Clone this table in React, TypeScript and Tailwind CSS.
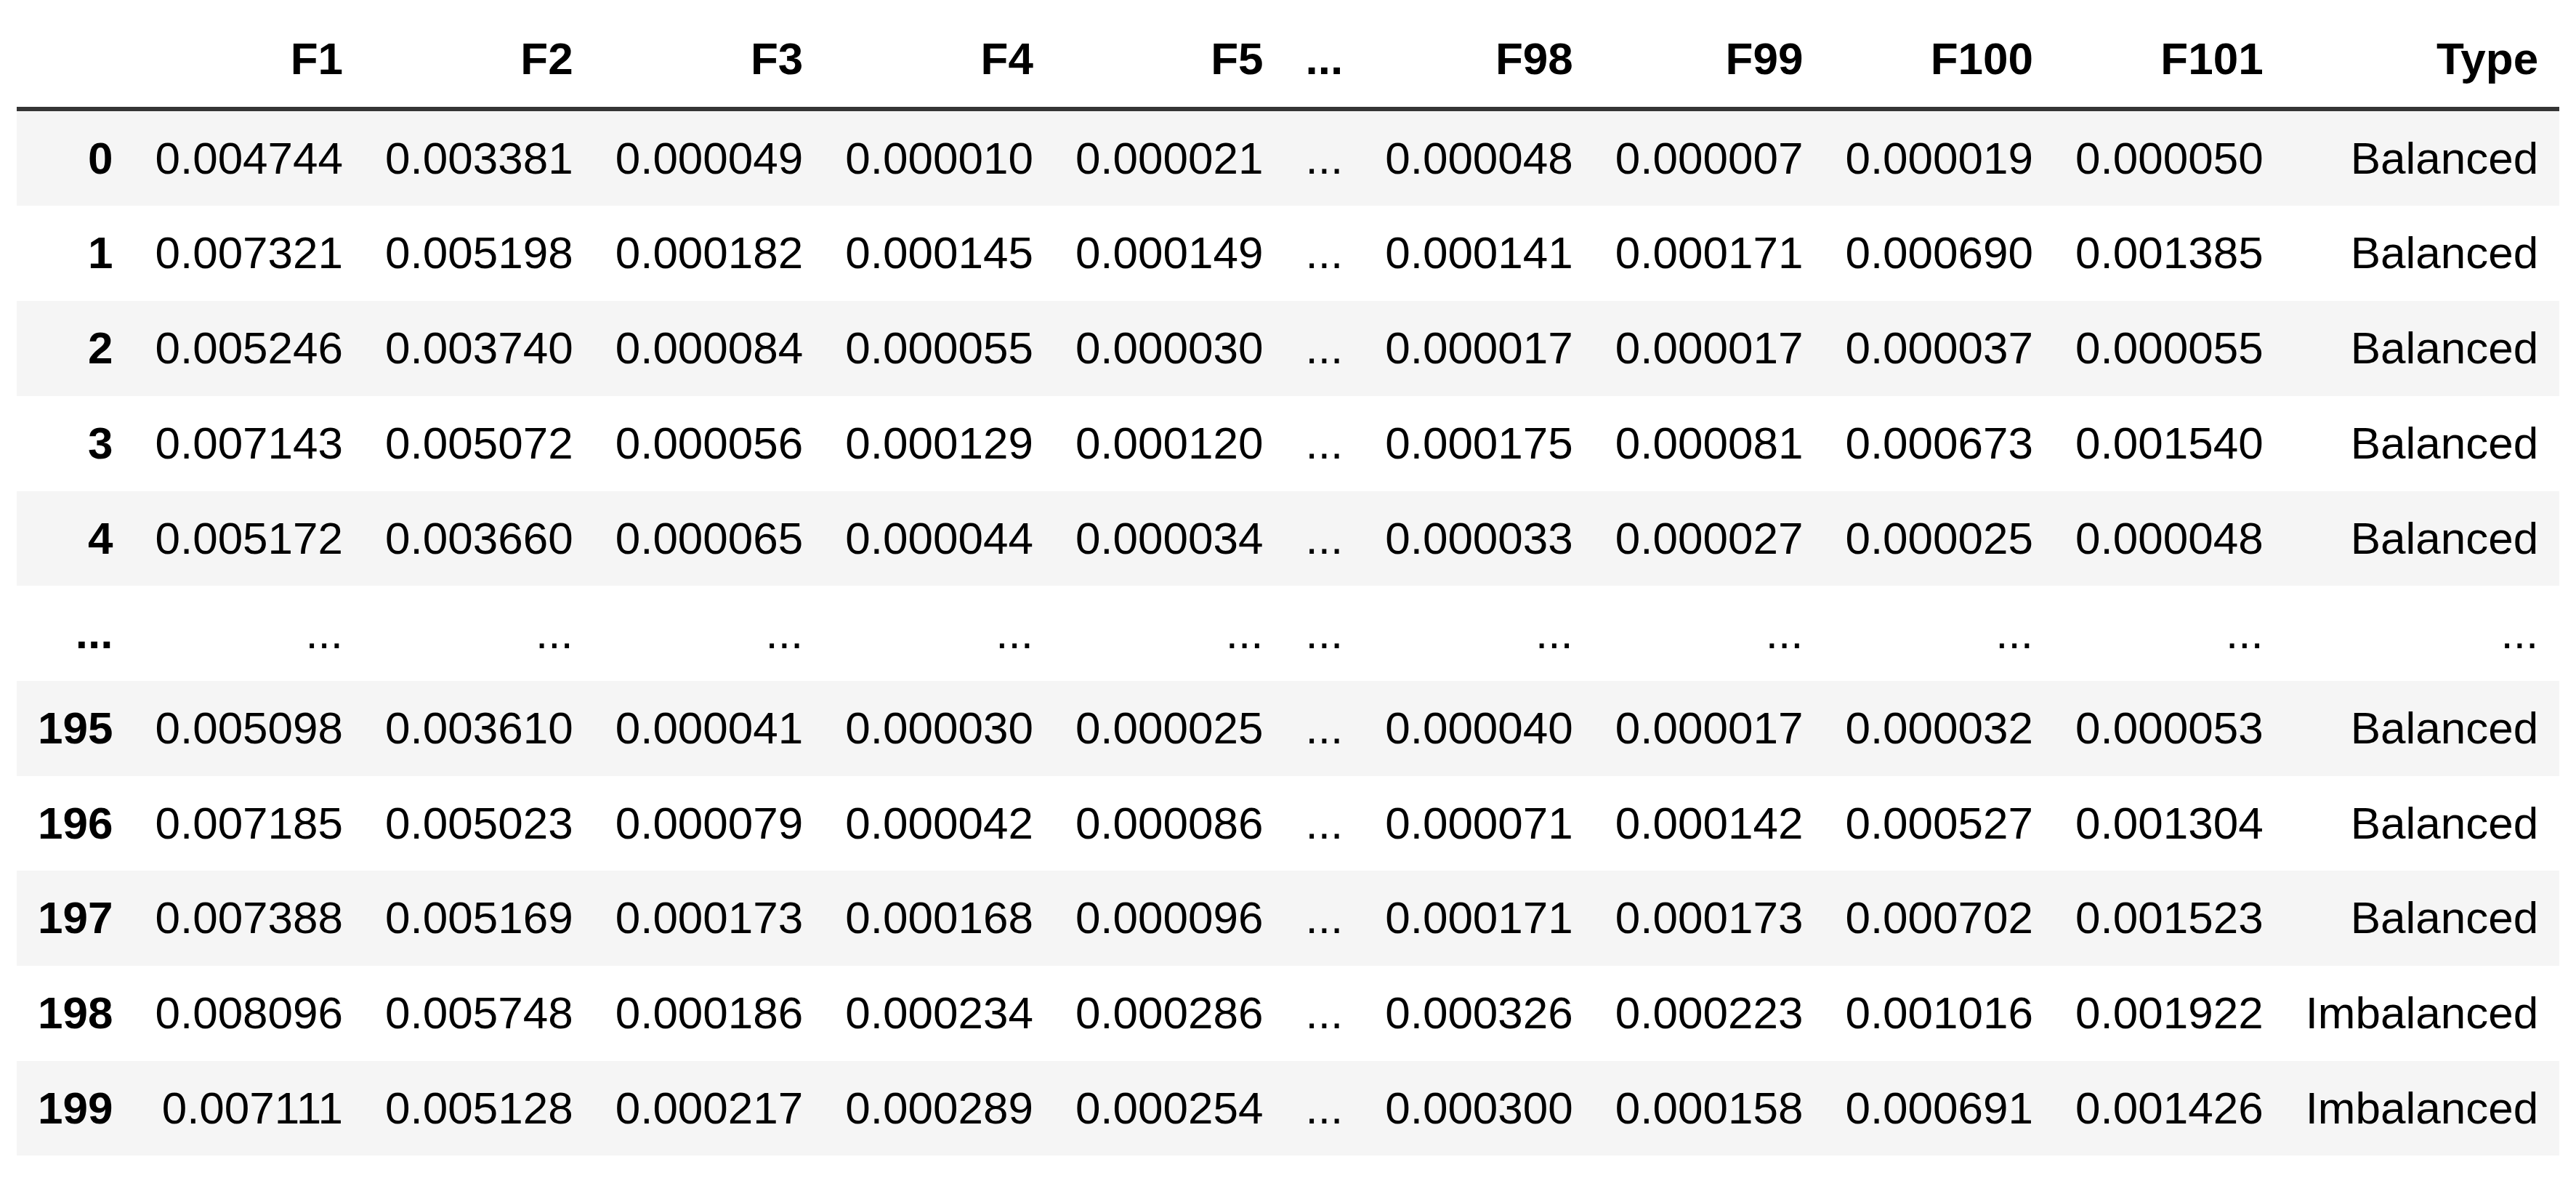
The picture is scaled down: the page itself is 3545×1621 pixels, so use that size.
const columns = ["F1", "F2", "F3", "F4", "F5", "...", "F98", "F99", "F100", "F101", "Type"];

const rows: [string, string[]][] = [
  ["0", ["0.004744", "0.003381", "0.000049", "0.000010", "0.000021", "...", "0.000048", "0.000007", "0.000019", "0.000050", "Balanced"]],
  ["1", ["0.007321", "0.005198", "0.000182", "0.000145", "0.000149", "...", "0.000141", "0.000171", "0.000690", "0.001385", "Balanced"]],
  ["2", ["0.005246", "0.003740", "0.000084", "0.000055", "0.000030", "...", "0.000017", "0.000017", "0.000037", "0.000055", "Balanced"]],
  ["3", ["0.007143", "0.005072", "0.000056", "0.000129", "0.000120", "...", "0.000175", "0.000081", "0.000673", "0.001540", "Balanced"]],
  ["4", ["0.005172", "0.003660", "0.000065", "0.000044", "0.000034", "...", "0.000033", "0.000027", "0.000025", "0.000048", "Balanced"]],
  ["...", ["...", "...", "...", "...", "...", "...", "...", "...", "...", "...", "..."]],
  ["195", ["0.005098", "0.003610", "0.000041", "0.000030", "0.000025", "...", "0.000040", "0.000017", "0.000032", "0.000053", "Balanced"]],
  ["196", ["0.007185", "0.005023", "0.000079", "0.000042", "0.000086", "...", "0.000071", "0.000142", "0.000527", "0.001304", "Balanced"]],
  ["197", ["0.007388", "0.005169", "0.000173", "0.000168", "0.000096", "...", "0.000171", "0.000173", "0.000702", "0.001523", "Balanced"]],
  ["198", ["0.008096", "0.005748", "0.000186", "0.000234", "0.000286", "...", "0.000326", "0.000223", "0.001016", "0.001922", "Imbalanced"]],
  ["199", ["0.007111", "0.005128", "0.000217", "0.000289", "0.000254", "...", "0.000300", "0.000158", "0.000691", "0.001426", "Imbalanced"]],
];

const cell = "px-[29px] py-[29px] leading-[72.7px] text-right whitespace-nowrap";

export default function App() {
  return (
    <div className="bg-white min-h-screen pt-[16px] pl-[23px] text-black font-['Liberation_Sans',Arial,sans-serif] text-[62px]">
      <table className="border-collapse">
        <thead>
          <tr className="border-b-[6px] border-[#353535]">
            <th className={cell}></th>
            {columns.map((c) => (
              <th key={c} className={`${cell} font-bold`}>
                {c}
              </th>
            ))}
          </tr>
        </thead>
        <tbody>
          {rows.map(([idx, vals], i) => (
            <tr key={idx} className={i % 2 === 0 ? "bg-[#f5f5f5]" : "bg-white"}>
              <th className={`${cell} font-bold`}>{idx}</th>
              {vals.map((v, j) => (
                <td key={j} className={`${cell} font-normal`}>
                  {v}
                </td>
              ))}
            </tr>
          ))}
        </tbody>
      </table>
    </div>
  );
}
